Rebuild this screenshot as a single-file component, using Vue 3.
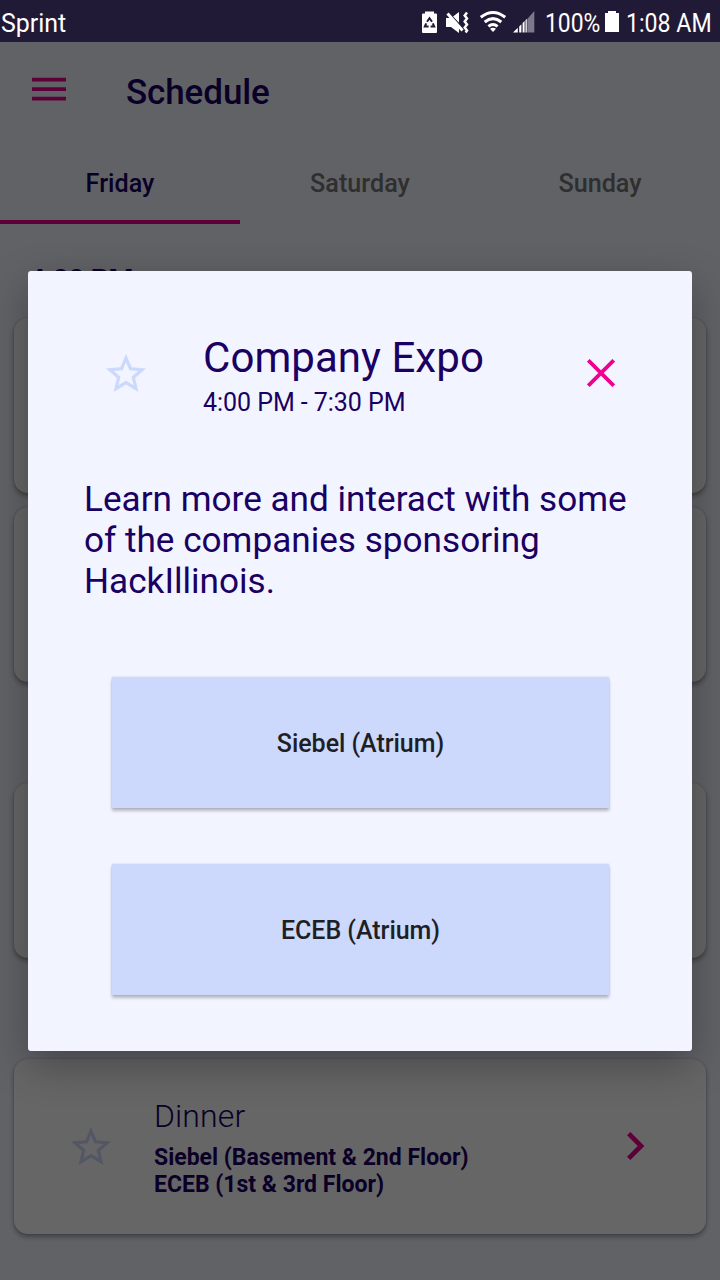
<script setup>
const tabs = ['Friday', 'Saturday', 'Sunday']
const active = 'Friday'
const star =
  'M22 9.24l-7.19-.62L12 2 9.19 8.63 2 9.24l5.46 4.73L5.82 21 12 17.27 18.18 21l-1.63-7.03L22 9.24zM12 15.4l-3.76 2.27 1-4.28-3.32-2.88 4.38-.38L12 6.1l1.71 4.04 4.38.38-3.32 2.88 1 4.28L12 15.4z'
const rooms = ['Siebel (Atrium)', 'ECEB (Atrium)']
</script>

<template>
  <div class="screen">
    <header class="status">
      <span class="carrier">Sprint</span>
      <svg class="status-icons" width="118" height="42" viewBox="417 0 118 42" fill="#fff">
        <path d="M425 11.500h9v2h2q1 0 1 1V32q0 1-1 1h-13q-1 0-1-1V14.500q0-1 1-1h2z" />
        <g fill="none" stroke="#211a37" stroke-width="2">
          <path d="M427 21.800l2.500-3.600 2.500 3.600M432.800 23.300l1.400 3.300h-3.600M428.600 26.600h-3.800l1.400-3.300" />
        </g>
        <path d="M446 18h5l8-6v21l-8-6h-5z" />
        <path d="M446 10.500l18.500 19.500" stroke="#211a37" stroke-width="2" />
        <path d="M447.500 13.500l15 17" stroke="#fff" stroke-width="3" />
        <path d="M467 12.500l-2.300 3 2.300 3-2.300 3 2.300 3-2.300 3 2.300 3-1.400 2" fill="none" stroke="#fff" stroke-width="2.500" />
        <g fill="none" stroke="#fff" stroke-width="3">
          <path d="M480.800 17.300q12.200-9.600 24.400 0" />
          <path d="M484.700 22q8.300-6.700 16.600 0" />
          <path d="M488.400 26.400q4.600-3.800 9.200 0" />
        </g>
        <path d="M490 28.700q3-2 6 0l-3 3.200z" />
        <path d="M527.300 19L534.300 11v21.500h-7z" fill="#7d798a" />
        <path d="M513 32.500l4.800-4.800v4.800zM519.200 26.400l2.200-2.200v8.300h-2.200zM522.600 23l2-2v11.500h-2zM525.500 20.200l1.300-1.400v13.700h-1.300z" />
      </svg>
      <span class="percent">100%</span>
      <svg class="battery" width="14" height="22" viewBox="0 0 14 22" fill="#fff">
        <path d="M0 2h3V0h8v2h3v19H0z" />
      </svg>
      <span class="clock">1:08 AM</span>
    </header>

    <main class="page">
      <div class="bar">
        <svg class="menu" width="34" height="24" viewBox="0 0 34 24" stroke="#ec008c" stroke-width="3.700">
          <path d="M0 2.700h34M0 12.200h34M0 21.700h34" />
        </svg>
        <h1>Schedule</h1>
      </div>
      <nav>
        <span v-for="t in tabs" :key="t" :class="{ active: t === active }">{{ t }}</span>
      </nav>
      <section class="list">
        <h2>4:00 PM</h2>
        <article></article>
        <article></article>
        <div class="gap"></div>
        <article></article>
        <div class="gap"></div>
        <article>
          <svg class="card-star" width="48" height="48" viewBox="0 0 24 24" fill="#ccd8fc"><path :d="star" /></svg>
          <div class="info">
            <h3>Dinner</h3>
            <p>Siebel (Basement &amp; 2nd Floor)<br />ECEB (1st &amp; 3rd Floor)</p>
          </div>
          <svg class="chevron" width="18" height="28" viewBox="0 0 18 28" fill="none" stroke="#ec008c" stroke-width="4.700">
            <path d="M1.700 1.600L14.100 14 1.700 26.400" />
          </svg>
        </article>
      </section>
    </main>

    <div class="scrim">
      <div class="dialog">
        <div class="head">
          <svg class="head-star" width="48" height="48" viewBox="0 0 24 24" fill="#ccd8fc"><path :d="star" /></svg>
          <div class="title">
            <h4>Company Expo</h4>
            <p>4:00 PM - 7:30 PM</p>
          </div>
          <svg class="close" width="28" height="28" viewBox="0 0 28 28" stroke="#f0008f" stroke-width="3.800">
            <path d="M1.300 1.300l25.400 25.400M26.700 1.300L1.300 26.700" />
          </svg>
        </div>
        <p class="desc">Learn more and interact with some<br />of the companies sponsoring<br />HackIllinois.</p>
        <button v-for="r in rooms" :key="r">{{ r }}</button>
      </div>
    </div>
  </div>
</template>

<style>
body { margin: 0; }
</style>

<style scoped>
* { box-sizing: border-box; }
h1, h2, h3, h4, p { margin: 0; }
svg { display: block; flex: none; }
.screen {
  position: relative;
  width: 720px;
  height: 1280px;
  overflow: hidden;
  font-family: Roboto, sans-serif;
  color: #1a0062;
  white-space: nowrap;
}
.status {
  height: 42px;
  display: flex;
  background: #211a37;
  color: #fff;
  font-size: 26px;
  line-height: 46px;
}
.carrier { width: 417px; padding-left: 1px; transform: scaleX(.96); transform-origin: 0 0; }
.status-icons { width: 118px; }
.percent { width: 60px; margin-left: 10px; transform: scaleX(.88); transform-origin: 0 0; }
.battery { margin-top: 11px; }
.clock { width: 94px; margin-left: 7px; transform: scaleX(.89); transform-origin: 0 0; }
.page { height: 1238px; background: #f2f5ff; }
.bar { height: 102px; display: flex; padding-left: 32px; }
.menu { margin-top: 35px; }
h1 { margin: 30px 0 0 60px; font-size: 35px; line-height: 41px; font-weight: 500; letter-spacing: -.1px; }
nav { height: 80px; display: grid; grid-template-columns: repeat(3, 1fr); }
nav span {
  height: 80px;
  text-align: center;
  font-size: 25.200px;
  font-weight: 500;
  line-height: 80px;
  color: #757575;
}
nav .active { color: #1a0062; box-shadow: inset 0 -4px #ec008c; }
.list { padding: 39px 14px 0; }
h2 { height: 55px; padding-left: 15px; font-size: 28.500px; line-height: 33px; font-weight: 700; letter-spacing: -.5px; }
article {
  height: 175px;
  margin-bottom: 14px;
  border-radius: 14px;
  background: #fff;
  box-shadow: 0 3px 5px rgba(0, 0, 0, .34), 0 0 2px rgba(0, 0, 0, .18);
  display: flex;
}
.gap { height: 87px; }
.card-star { margin: 64px 0 0 53px; }
.info { width: 473px; margin: 39px 0 0 39px; }
h3 { font-size: 32px; line-height: 37px; font-weight: 300; letter-spacing: .1px; }
.info p { margin-top: 9px; font-size: 23px; line-height: 27px; font-weight: 700; }
.chevron { margin-top: 73px; }
.scrim {
  position: absolute;
  inset: 42px 0 0;
  background: rgba(0, 0, 0, .6);
  padding: 229px 28px 0;
}
.dialog {
  height: 780px;
  padding: 62px 83px 0;
  border-radius: 3px;
  background: #f2f5ff;
  box-shadow: 0 14px 42px rgba(0, 0, 0, .3);
}
.head { display: flex; margin-left: -9px; }
.head-star { margin-top: 17px; }
.title { flex: none; width: 384px; margin-left: 53px; }
h4 { font-size: 42px; line-height: 49px; font-weight: 400; letter-spacing: .05px; }
.title p { font-size: 25px; line-height: 29px; margin-top: 6px; letter-spacing: -.05px; }
.close { margin-top: 26px; }
.desc { margin: 62px 0 75px -27px; font-size: 35.150px; line-height: 41px; }
button {
  display: block;
  width: 497px;
  height: 131px;
  margin: 0 0 56px .5px;
  padding: 2px 0 0 1px;
  border: 0;
  background: #ccd8fc;
  color: #1e1f25;
  font: 500 25px/29px Roboto, sans-serif;
  letter-spacing: -.04px;
  box-shadow: 0 3px 3px rgba(0, 0, 0, .24), 0 0 2px rgba(0, 0, 0, .15);
}
</style>
